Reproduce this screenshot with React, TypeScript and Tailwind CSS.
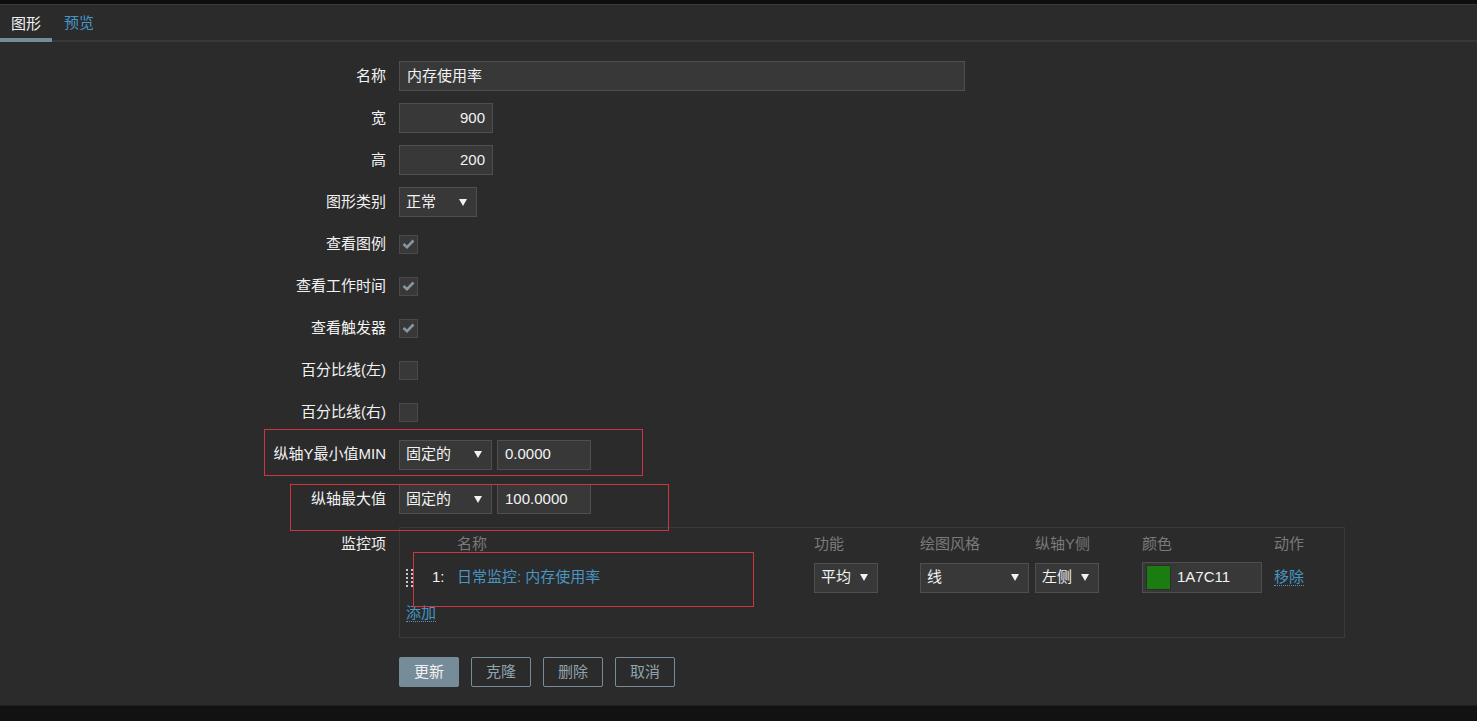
import React from "react";

const FONT = { fontFamily: '"Liberation Sans", Arial, "Noto Sans CJK SC", sans-serif' };

function Arrow() {
  return (
    <svg width="8" height="7" viewBox="0 0 8 7" className="shrink-0">
      <path d="M0 0 L8 0 L4 7 Z" fill="#f2f2f2" />
    </svg>
  );
}

function Select({ value, width }: { value: string; width: string }) {
  return (
    <div className={`${width} h-[30px] flex items-center justify-between pl-[6px] pr-[9px] bg-[#383838] border border-[#4f4f4f] text-[#f2f2f2]`}>
      <span>{value}</span>
      <Arrow />
    </div>
  );
}

function TextInput({ value, width, right }: { value: string; width: string; right?: boolean }) {
  return (
    <div className={`${width} h-[30px] flex items-center px-[7px] bg-[#383838] border border-[#4f4f4f] text-[#f2f2f2] ${right ? "justify-end" : ""}`}>
      {value}
    </div>
  );
}

function Check({ on }: { on?: boolean }) {
  return (
    <div className="w-[19px] h-[19px] bg-[#383838] border border-[#4a4a4a] flex items-center justify-center">
      {on && (
        <svg width="13" height="10" viewBox="0 0 13 10">
          <path d="M1.5 5 L5 8.2 L11.5 1.5" fill="none" stroke="#8597a4" strokeWidth="2.6" />
        </svg>
      )}
    </div>
  );
}

function Row({ label, children, h = "h-[30px]", mb = "mb-[12px]" }: { label: string; children: React.ReactNode; h?: string; mb?: string }) {
  return (
    <div className={`grid grid-cols-[386px_1fr] gap-x-[13px] items-center ${h} ${mb}`}>
      <div className="text-right text-[#f2f2f2]">{label}</div>
      <div className="flex items-center gap-[5px]">{children}</div>
    </div>
  );
}

function DragHandle() {
  return (
    <div className="grid grid-cols-2 gap-x-[3px] gap-y-[2px] w-[7px]">
      {Array.from({ length: 10 }).map((_, i) => (
        <span key={i} className="w-[2px] h-[2px] bg-[#c8c8c8]" />
      ))}
    </div>
  );
}

export default function App() {
  return (
    <div className="relative w-[1477px] h-[721px] bg-[#2b2b2b] overflow-hidden text-[15px]" style={FONT}>
      <div className="h-[4px] bg-[#0e0e0e]" />
      <div className="h-[1px] bg-[#3a3a3a]" />

      {/* tabs */}
      <div className="flex h-[37px] border-b-2 border-[#383838]">
        <div className="w-[52px] flex flex-col">
          <div className="flex-1 flex items-center justify-center text-[#f2f2f2] pt-[5px]">图形</div>
          <div className="h-[4px] bg-[#768d99] mb-[-2px]" />
        </div>
        <div className="px-[12px] flex items-center text-[#4796c4] pt-[5px] pb-[4px]">预览</div>
      </div>

      {/* form */}
      <div className="pt-[19px]">
        <Row label="名称">
          <TextInput value="内存使用率" width="w-[566px]" />
        </Row>
        <Row label="宽">
          <TextInput value="900" width="w-[94px]" right />
        </Row>
        <Row label="高">
          <TextInput value="200" width="w-[94px]" right />
        </Row>
        <Row label="图形类别">
          <Select value="正常" width="w-[78px]" />
        </Row>
        <Row label="查看图例">
          <Check on />
        </Row>
        <Row label="查看工作时间">
          <Check on />
        </Row>
        <Row label="查看触发器">
          <Check on />
        </Row>
        <Row label="百分比线(左)">
          <Check />
        </Row>
        <Row label="百分比线(右)">
          <Check />
        </Row>
        <Row label="纵轴Y最小值MIN" h="h-[31px]" mb="mb-[14px]">
          <Select value="固定的" width="w-[93px]" />
          <TextInput value="0.0000" width="w-[94px]" />
        </Row>
        <Row label="纵轴最大值" h="h-[30px]" mb="mb-[13px]">
          <Select value="固定的" width="w-[93px]" />
          <TextInput value="100.0000" width="w-[94px]" />
        </Row>

        {/* items */}
        <div className="grid grid-cols-[386px_1fr] gap-x-[13px] items-start mb-[19px]">
          <div className="text-right text-[#f2f2f2] pt-[6px]">监控项</div>
          <div className="w-[946px] h-[111px] border border-[#3a3a3a] pt-[5px]">
            <div className="grid grid-cols-[27px_30px_357px_106px_115px_107px_132px_1fr] text-[#7a7a7a] h-[20px] items-center">
              <div />
              <div />
              <div>名称</div>
              <div>功能</div>
              <div>绘图风格</div>
              <div>纵轴Y侧</div>
              <div>颜色</div>
              <div>动作</div>
            </div>
            <div className="grid grid-cols-[27px_30px_357px_106px_115px_107px_132px_1fr] items-center h-[30px] mt-[9px]">
              <div className="pl-[6px]"><DragHandle /></div>
              <div className="pl-[5px] text-[#f2f2f2]">1:</div>
              <div className="text-[#4796c4]">日常监控: 内存使用率</div>
              <div><Select value="平均" width="w-[64px]" /></div>
              <div><Select value="线" width="w-[109px]" /></div>
              <div><Select value="左侧" width="w-[64px]" /></div>
              <div>
                <div className="w-[120px] h-[31px] flex items-center gap-[6px] pl-[3px] bg-[#383838] border border-[#4f4f4f] text-[#f2f2f2]">
                  <span className="w-[25px] h-[25px] bg-[#1a7c11] border border-[#2d2d2d]" />
                  <span>1A7C11</span>
                </div>
              </div>
              <div>
                <span className="text-[#4796c4] border-b border-dotted border-[#4796c4]">移除</span>
              </div>
            </div>
            <div className="pl-[6px] mt-[10px]">
              <span className="text-[#4796c4] border-b border-dotted border-[#4796c4]">添加</span>
            </div>
          </div>
        </div>

        {/* buttons */}
        <div className="grid grid-cols-[386px_1fr] gap-x-[13px]">
          <div />
          <div className="flex gap-[12px]">
            <button className="w-[60px] h-[30px] bg-[#768d99] text-[#f2f2f2] rounded-[2px]">更新</button>
            <button className="w-[60px] h-[30px] border border-[#768d99] text-[#8fa3ad] rounded-[2px]">克隆</button>
            <button className="w-[60px] h-[30px] border border-[#768d99] text-[#8fa3ad] rounded-[2px]">删除</button>
            <button className="w-[60px] h-[30px] border border-[#768d99] text-[#8fa3ad] rounded-[2px]">取消</button>
          </div>
        </div>
      </div>

      {/* footer strip */}
      <div className="absolute left-0 right-0 bottom-0 h-[16px] bg-[#121212] border-t border-[#1e1e1e]" />

      {/* annotation boxes */}
      <div className="absolute left-[264px] top-[429px] w-[379px] h-[47px] border border-[#d0343f]" />
      <div className="absolute left-[290px] top-[484px] w-[379px] h-[47px] border border-[#d0343f]" />
      <div className="absolute left-[413px] top-[552px] w-[341px] h-[55px] border border-[#d0343f]" />
    </div>
  );
}
